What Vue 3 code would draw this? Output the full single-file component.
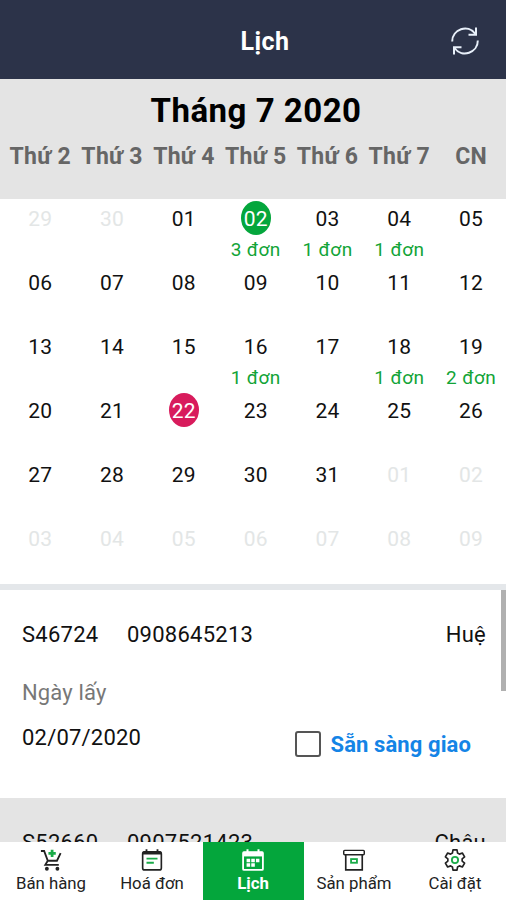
<script setup>
import { ref } from 'vue'

const weekDays = ['Thứ 2', 'Thứ 3', 'Thứ 4', 'Thứ 5', 'Thứ 6', 'Thứ 7', 'CN']

const selected = ref('2020-07-02')
const today = '2020-07-22'

const orderCounts = {
  '2020-07-02': 3,
  '2020-07-03': 1,
  '2020-07-04': 1,
  '2020-07-16': 1,
  '2020-07-18': 1,
  '2020-07-19': 2
}

// 6 semanas a partir del lunes 29/06
const days = Array.from({ length: 42 }, (_, i) => {
  const d = new Date(Date.UTC(2020, 5, 29 + i))
  const key = d.toISOString().slice(0, 10)
  return {
    key,
    label: key.slice(8),
    outside: d.getUTCMonth() !== 6,
    count: orderCounts[key]
  }
})

const orders = ref([
  { code: 'S46724', phone: '0908645213', name: 'Huệ', date: '02/07/2020', ready: false },
  { code: 'S52660', phone: '0907521423', name: 'Châu' }
])

const tabs = [
  { id: 'sale', label: 'Bán hàng' },
  { id: 'bill', label: 'Hoá đơn' },
  { id: 'calendar', label: 'Lịch' },
  { id: 'product', label: 'Sản phẩm' },
  { id: 'settings', label: 'Cài đặt' }
]
const activeTab = ref('calendar')
</script>

<template>
  <div class="screen">
    <header class="topbar">
      <h1 class="topbar-title">Lịch</h1>
      <button class="refresh-btn" aria-label="Refresh">
        <svg viewBox="0 0 30 30" width="30" height="30" fill="none" stroke="currentColor" stroke-width="2">
          <path d="M2.2 15.5C2 3.5 18 -2.5 25.5 8M26 1.5V8.8H18.5" />
          <path d="M27.8 14.5C28 26.5 12 32.5 4.5 22M4 28.5V21.2H11.5" />
        </svg>
      </button>
    </header>

    <section class="month-head">
      <h2 class="month-title">Tháng 7 2020</h2>
      <div class="week-row">
        <span v-for="d in weekDays" :key="d">{{ d }}</span>
      </div>
    </section>

    <section class="month-grid">
      <div
        v-for="day in days"
        :key="day.key"
        class="day"
        :class="{ outside: day.outside, selected: day.key === selected, today: day.key === today }"
        @click="selected = day.key"
      >
        <span class="day-number">{{ day.label }}</span>
        <span v-if="day.count" class="day-count">{{ day.count }} đơn</span>
      </div>
    </section>

    <main class="orders">
      <article v-for="order in orders" :key="order.code" class="order">
        <div class="order-top">
          <span class="order-code">{{ order.code }}</span>
          <span>{{ order.phone }}</span>
          <span class="order-name">{{ order.name }}</span>
        </div>
        <div v-if="order.date" class="order-bottom">
          <div>
            <div class="order-label">Ngày lấy</div>
            <div class="order-date">{{ order.date }}</div>
          </div>
          <label class="ready">
            <input v-model="order.ready" type="checkbox" />
            <span>Sẵn sàng giao</span>
          </label>
        </div>
      </article>
      <div class="scroll-thumb"></div>
    </main>

    <nav class="tabbar">
      <button
        v-for="tab in tabs"
        :key="tab.id"
        class="tab"
        :class="{ active: activeTab === tab.id }"
        @click="activeTab = tab.id"
      >
        <svg class="tab-icon" viewBox="0 0 24 24" fill="none" stroke="currentColor" stroke-width="1.8">
          <template v-if="tab.id === 'sale'">
            <path d="M1 2.2H4.5L8.5 12.8H18.5L22.5 4.5M8.5 12.8L5.8 17.3H20.5" stroke-width="2" />
            <path class="accent" d="M13.2 .8V8.8M9.2 4.8H17.2" stroke-width="3" />
            <circle cx="7.5" cy="21.5" r="2.1" fill="currentColor" stroke="none" />
            <circle cx="19" cy="21.5" r="2.1" fill="currentColor" stroke="none" />
          </template>
          <template v-else-if="tab.id === 'bill'">
            <rect x="1.8" y="3.2" width="20.4" height="19.6" rx="2.2" />
            <path d="M2 4.3H22" stroke-width="3.4" />
            <path d="M6 .3V4M18 .3V4" stroke-width="2" />
            <path class="accent" d="M6 10.5H18M6 15H14" stroke-width="2" />
          </template>
          <template v-else-if="tab.id === 'calendar'">
            <rect x="1.2" y="3.5" width="21.6" height="19.3" rx="1" stroke-width="2" />
            <path d="M1 5.6H23" stroke-width="5" />
            <path d="M6 .3V4M18 .3V4" stroke-width="2.2" />
            <path d="M5 12.5H19M5 17.5H14" stroke-width="3.8" stroke-dasharray="3.9 1.2" />
          </template>
          <template v-else-if="tab.id === 'product'">
            <rect x=".8" y="1.5" width="22.4" height="4.8" rx="1" stroke-width="1.6" />
            <path d="M3 6.5V22.8H21V6.5" />
            <rect class="accent" x="8.8" y="11" width="6.4" height="4" stroke-width="2" />
          </template>
          <template v-else>
            <path
              stroke-width="1.8"
              stroke-linejoin="round"
              d="M9.8 1H14.2L14.8 4.4L16.8 5.6L20 4.4L22.5 8.6L19.8 10.8V13.2L22.5 15.4L20 19.6L16.8 18.4L14.8 19.6L14.2 23H9.8L9.2 19.6L7.2 18.4L4 19.6L1.5 15.4L4.2 13.2V10.8L1.5 8.6L4 4.4L7.2 5.6L9.2 4.4Z"
            />
            <circle class="accent" cx="12" cy="12" r="3.4" stroke-width="2" />
          </template>
        </svg>
        <span>{{ tab.label }}</span>
      </button>
    </nav>
  </div>
</template>

<style>
body {
  margin: 0;
}
</style>

<style scoped>
.screen {
  display: flex;
  flex-direction: column;
  height: 900px;
  overflow: hidden;
  background: #fff;
  color: #111;
  font-family: Roboto, "Noto Sans", sans-serif;
}

button {
  padding: 0;
  border: none;
  background: transparent;
  color: inherit;
  font: inherit;
  cursor: pointer;
}

/* CABECERA */
.topbar {
  flex: none;
  display: grid;
  grid-template-columns: 1fr auto 1fr;
  align-items: center;
  box-sizing: border-box;
  height: 79px;
  padding: 5px 26px 0 50px;
  background: #2c3349;
  color: #fff;
}

.topbar-title {
  grid-column: 2;
  margin: 0;
  font-size: 25px;
  font-weight: 700;
  line-height: 28px;
  letter-spacing: 0.4px;
}

.refresh-btn {
  justify-self: end;
  height: 30px;
  margin-top: -3px;
  color: #e8f0fa;
}

/* MES */
.month-head {
  flex: none;
  box-sizing: border-box;
  height: 120px;
  padding-top: 12px;
  background: #e4e4e4;
}

.month-title {
  margin: 0;
  padding-left: 6px;
  color: #000;
  font-size: 33px;
  font-weight: 700;
  line-height: 40px;
  letter-spacing: 0.5px;
  text-align: center;
}

.week-row,
.month-grid {
  display: grid;
  grid-template-columns: repeat(7, 71.8px);
  padding-left: 4.4px;
  text-align: center;
}

.week-row {
  margin-top: 12px;
  color: #666;
  font-size: 23px;
  font-weight: 700;
  line-height: 28px;
  letter-spacing: 0.3px;
  white-space: nowrap;
}

.month-grid {
  flex: none;
  grid-auto-rows: 64px;
  box-sizing: border-box;
  height: 385px;
}

.day {
  display: flex;
  flex-direction: column;
  align-items: center;
  padding-top: 2px;
}

.day-number {
  width: 30px;
  height: 34px;
  border-radius: 50%;
  font-size: 21px;
  line-height: 36px;
  letter-spacing: 0.2px;
}

.day-count {
  margin-top: 3px;
  color: #12a437;
  font-size: 19px;
  line-height: 24px;
  letter-spacing: 0.4px;
}

.outside {
  color: #e3e6e6;
}

.selected .day-number {
  background: #04a63c;
  color: #fff;
}

.today .day-number {
  background: #d81b5c;
  color: #fff;
}

/* PEDIDOS */
.orders {
  position: relative;
  flex: 1;
  min-height: 0;
  overflow: hidden;
  border-top: 6px solid #e4e7ea;
}

.order {
  box-sizing: border-box;
  height: 208px;
  padding: 30px 20px 0 22px;
  font-size: 22px;
}

.order:nth-child(even) {
  background: #e4e4e4;
}

.order-top {
  display: flex;
  line-height: 30px;
  letter-spacing: 0.25px;
}

.order-code {
  width: 105px;
}

.order-name {
  margin-left: auto;
}

.order-bottom {
  display: flex;
  justify-content: space-between;
  padding: 29px 15px 0 0;
  line-height: 28px;
}

.order-label {
  color: #777;
  letter-spacing: 0.15px;
}

.order-date {
  margin-top: 17px;
  letter-spacing: 0.2px;
}

.ready {
  display: flex;
  align-items: center;
  gap: 10px;
  height: 28px;
  margin-top: 52px;
  color: #1484e6;
  font-weight: 700;
  letter-spacing: 0.1px;
}

.ready input {
  appearance: none;
  box-sizing: border-box;
  width: 26px;
  height: 26px;
  margin: -2px 0 0;
  border: 2px solid #555;
  border-radius: 3px;
}

.ready input:checked {
  background: #1484e6;
}

.scroll-thumb {
  position: absolute;
  top: 0;
  right: 0;
  width: 5px;
  height: 101px;
  background: #b0b0b0;
}

/* MENÚ INFERIOR */
.tabbar {
  flex: none;
  display: grid;
  grid-template-columns: repeat(5, 1fr);
  padding-left: 1px;
  height: 58px;
  background: #fff;
}

.tab {
  display: flex;
  flex-direction: column;
  align-items: center;
  padding: 7px 1px 0 0;
  color: #222;
  font-size: 16.8px;
  line-height: 22px;
}

.tab-icon {
  width: 22px;
  height: 22px;
  margin-bottom: 1px;
}

.accent {
  stroke: #1aab48;
}

.tab.active {
  background: #04a63c;
  color: #fff;
  font-weight: 700;
}
</style>
